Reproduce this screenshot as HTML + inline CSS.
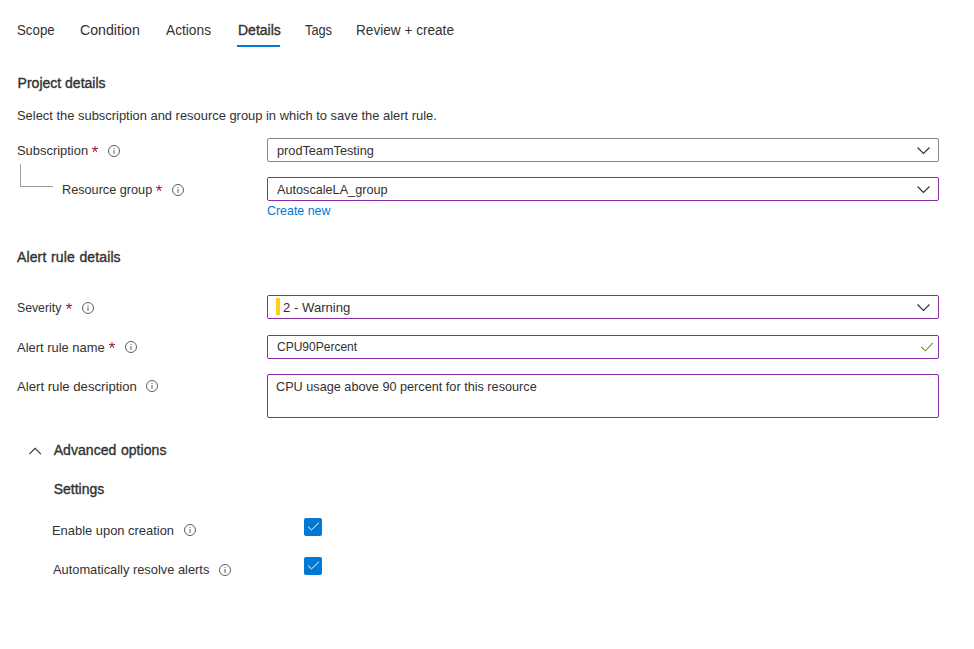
<!DOCTYPE html>
<html><head><meta charset="utf-8">
<style>
html,body{margin:0;padding:0;background:#fff;width:974px;height:649px;overflow:hidden;}
body{position:relative;font-family:"Liberation Sans",sans-serif;color:#323130;}
.t{position:absolute;white-space:nowrap;line-height:1;font-size:13px;transform-origin:0 0;}
.s14{font-size:14px;}
.sb{-webkit-text-stroke:0.35px #323130;}
.req{color:#a4262c;}
.box{position:absolute;left:267px;width:670px;height:22px;border:1px solid #8a2da5;border-radius:2px;background:#fff;}
.gray{border-color:#8a8886;}
.info{position:absolute;}
.chev{position:absolute;}
.cb{position:absolute;left:304px;width:18px;height:18px;background:#0078d4;border-radius:2px;}
</style></head><body>
<div style="position:absolute;left:237px;top:45px;width:43px;height:2px;background:#0078d4;"></div>
<div style="position:absolute;left:20px;top:164px;width:32px;height:22px;border-left:1px solid #a19f9d;border-bottom:1px solid #a19f9d;"></div>
<div class="box gray" style="top:138px;"></div>
<div class="box" style="top:177px;"></div>
<div class="box" style="top:295px;"></div>
<div class="box" style="top:335px;"></div>
<div class="box" style="top:374px;height:42px;"></div>
<div style="position:absolute;left:276px;top:298px;width:4px;height:17px;background:#fcd116;"></div>
<svg class="chev" style="left:917px;top:147px;" width="13" height="8" viewBox="0 0 13 8"><path d="M0.5 0.5 L6.5 6.5 L12.5 0.5" fill="none" stroke="#323130" stroke-width="1.15"/></svg>
<svg class="chev" style="left:917px;top:186px;" width="13" height="8" viewBox="0 0 13 8"><path d="M0.5 0.5 L6.5 6.5 L12.5 0.5" fill="none" stroke="#323130" stroke-width="1.15"/></svg>
<svg class="chev" style="left:917px;top:304px;" width="13" height="8" viewBox="0 0 13 8"><path d="M0.5 0.5 L6.5 6.5 L12.5 0.5" fill="none" stroke="#323130" stroke-width="1.15"/></svg>
<svg class="chev" style="left:920px;top:342px;" width="14" height="11" viewBox="0 0 14 11"><path d="M1.2 5 L5.4 8.8 L12.8 0.9" fill="none" stroke="#57a300" stroke-width="1.05"/></svg>
<svg class="chev" style="left:29px;top:447px;" width="13" height="8" viewBox="0 0 13 8"><path d="M0.3 7.2 L6.1 1.3 L11.9 7.2" fill="none" stroke="#323130" stroke-width="1.1"/></svg>
<svg class="info" style="left:108px;top:145px;" width="12" height="12" viewBox="0 0 12 12"><circle cx="6" cy="6" r="5.5" fill="none" stroke="#605e5c" stroke-width="1"/><rect x="5.5" y="3" width="1" height="1" fill="#605e5c"/><rect x="5.5" y="5" width="1" height="4" fill="#605e5c"/></svg>
<svg class="info" style="left:172px;top:184px;" width="12" height="12" viewBox="0 0 12 12"><circle cx="6" cy="6" r="5.5" fill="none" stroke="#605e5c" stroke-width="1"/><rect x="5.5" y="3" width="1" height="1" fill="#605e5c"/><rect x="5.5" y="5" width="1" height="4" fill="#605e5c"/></svg>
<svg class="info" style="left:82px;top:302px;" width="12" height="12" viewBox="0 0 12 12"><circle cx="6" cy="6" r="5.5" fill="none" stroke="#605e5c" stroke-width="1"/><rect x="5.5" y="3" width="1" height="1" fill="#605e5c"/><rect x="5.5" y="5" width="1" height="4" fill="#605e5c"/></svg>
<svg class="info" style="left:125px;top:341px;" width="12" height="12" viewBox="0 0 12 12"><circle cx="6" cy="6" r="5.5" fill="none" stroke="#605e5c" stroke-width="1"/><rect x="5.5" y="3" width="1" height="1" fill="#605e5c"/><rect x="5.5" y="5" width="1" height="4" fill="#605e5c"/></svg>
<svg class="info" style="left:146px;top:380px;" width="12" height="12" viewBox="0 0 12 12"><circle cx="6" cy="6" r="5.5" fill="none" stroke="#605e5c" stroke-width="1"/><rect x="5.5" y="3" width="1" height="1" fill="#605e5c"/><rect x="5.5" y="5" width="1" height="4" fill="#605e5c"/></svg>
<svg class="info" style="left:184px;top:524px;" width="12" height="12" viewBox="0 0 12 12"><circle cx="6" cy="6" r="5.5" fill="none" stroke="#605e5c" stroke-width="1"/><rect x="5.5" y="3" width="1" height="1" fill="#605e5c"/><rect x="5.5" y="5" width="1" height="4" fill="#605e5c"/></svg>
<svg class="info" style="left:219px;top:564px;" width="12" height="12" viewBox="0 0 12 12"><circle cx="6" cy="6" r="5.5" fill="none" stroke="#605e5c" stroke-width="1"/><rect x="5.5" y="3" width="1" height="1" fill="#605e5c"/><rect x="5.5" y="5" width="1" height="4" fill="#605e5c"/></svg>
<svg style="position:absolute;left:91px;top:145px;" width="8" height="8" viewBox="0 0 8 8"><path d="M4 4 L4 1.2 M4 4 L1 3.2 M4 4 L7 3.2 M4 4 L2.2 6.8 M4 4 L5.8 6.8" stroke="#a4262c" stroke-width="1.1" fill="none"/></svg>
<svg style="position:absolute;left:155px;top:184px;" width="8" height="8" viewBox="0 0 8 8"><path d="M4 4 L4 1.2 M4 4 L1 3.2 M4 4 L7 3.2 M4 4 L2.2 6.8 M4 4 L5.8 6.8" stroke="#a4262c" stroke-width="1.1" fill="none"/></svg>
<svg style="position:absolute;left:65px;top:302px;" width="8" height="8" viewBox="0 0 8 8"><path d="M4 4 L4 1.2 M4 4 L1 3.2 M4 4 L7 3.2 M4 4 L2.2 6.8 M4 4 L5.8 6.8" stroke="#a4262c" stroke-width="1.1" fill="none"/></svg>
<svg style="position:absolute;left:108.3px;top:341px;" width="8" height="8" viewBox="0 0 8 8"><path d="M4 4 L4 1.2 M4 4 L1 3.2 M4 4 L7 3.2 M4 4 L2.2 6.8 M4 4 L5.8 6.8" stroke="#a4262c" stroke-width="1.1" fill="none"/></svg>
<div class="cb" style="top:518px;"><svg width="18" height="18" viewBox="0 0 18 18" style="position:absolute;left:0;top:0"><path d="M4 8.6 L7.5 11.9 L15 4.6" fill="none" stroke="#fff" stroke-width="1"/></svg></div>
<div class="cb" style="top:557px;"><svg width="18" height="18" viewBox="0 0 18 18" style="position:absolute;left:0;top:0"><path d="M4 8.6 L7.5 11.9 L15 4.6" fill="none" stroke="#fff" stroke-width="1"/></svg></div>
<div class="t s14" style="left:17.40px;top:23px;transform:scaleX(0.9490);">Scope</div>
<div class="t s14" style="left:80.00px;top:23px;transform:scaleX(1.0120);">Condition</div>
<div class="t s14" style="left:166.30px;top:23px;transform:scaleX(0.9800);">Actions</div>
<div class="t s14 sb" style="left:238.00px;top:23px;transform:scaleX(1.0000);">Details</div>
<div class="t s14" style="left:304.75px;top:23px;transform:scaleX(0.9120);">Tags</div>
<div class="t s14" style="left:356.20px;top:23px;transform:scaleX(0.9720);">Review + create</div>
<div class="t s14 sb" style="left:17.60px;top:76px;transform:scaleX(1.0000);">Project details</div>
<div class="t" style="left:17.00px;top:109px;transform:scaleX(0.9930);">Select the subscription and resource group in which to save the alert rule.</div>
<div class="t" style="left:17.40px;top:144px;transform:scaleX(0.9940);">Subscription</div>
<div class="t" style="left:62.00px;top:183px;transform:scaleX(0.9750);">Resource group</div>
<div class="t" style="left:276.70px;top:144px;transform:scaleX(0.9780);">prodTeamTesting</div>
<div class="t" style="left:276.70px;top:183px;transform:scaleX(0.9740);">AutoscaleLA_group</div>
<div class="t" style="left:267.00px;top:204px;transform:scaleX(0.9550);color:#0078d4;">Create new</div>
<div class="t s14 sb" style="left:17.00px;top:250px;transform:scaleX(1.0000);letter-spacing:0.12px;word-spacing:0.6px;">Alert rule details</div>
<div class="t" style="left:17.40px;top:301px;transform:scaleX(0.9430);">Severity</div>
<div class="t" style="left:17.40px;top:341px;transform:scaleX(0.9950);">Alert rule name</div>
<div class="t" style="left:17.40px;top:380px;transform:scaleX(1.0120);">Alert rule description</div>
<div class="t" style="left:283.40px;top:301px;transform:scaleX(1.0100);">2 - Warning</div>
<div class="t" style="left:276.70px;top:340px;transform:scaleX(0.9240);">CPU90Percent</div>
<div class="t" style="left:276.20px;top:380px;transform:scaleX(0.9750);">CPU usage above 90 percent for this resource</div>
<div class="t s14 sb" style="left:53.70px;top:443px;transform:scaleX(1.0000);letter-spacing:0.06px;word-spacing:0.5px;">Advanced options</div>
<div class="t s14 sb" style="left:53.70px;top:482px;transform:scaleX(1.0000);">Settings</div>
<div class="t" style="left:52.20px;top:524px;transform:scaleX(0.9930);">Enable upon creation</div>
<div class="t" style="left:53.20px;top:563px;transform:scaleX(0.9880);">Automatically resolve alerts</div>
</body></html>
